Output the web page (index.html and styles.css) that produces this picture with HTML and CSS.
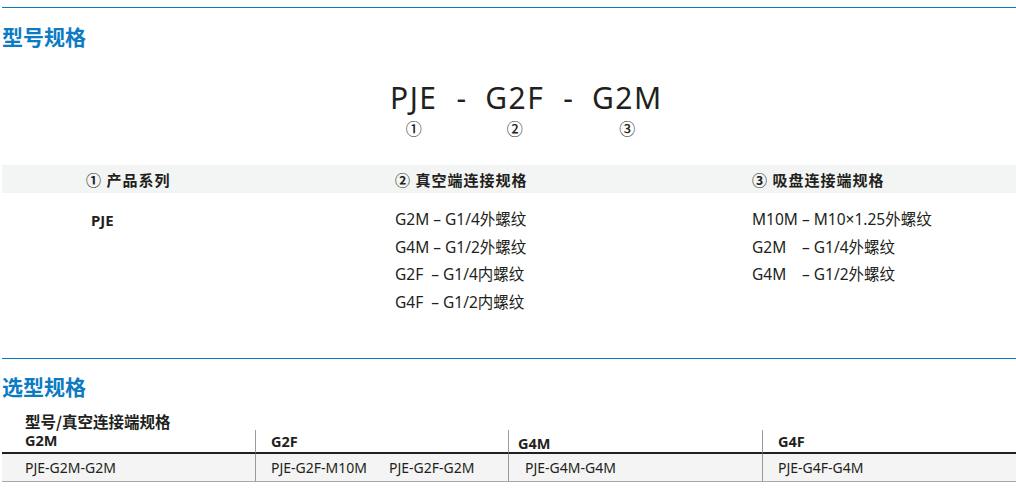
FILE: index.html
```html
<!DOCTYPE html>
<html lang="zh-CN">
<head>
<meta charset="utf-8">
<title>型号规格</title>
<link rel="stylesheet" href="styles.css">
</head>
<body>
<div class="page">
  <section class="sec sec-model">
    <div class="rule"></div>
    <h2 class="sec-title">型号规格</h2>
    <div class="code">
      <div class="seg"><span class="seg-code">PJE</span><span class="seg-num">①</span></div>
      <span class="dash">-</span>
      <div class="seg"><span class="seg-code">G2F</span><span class="seg-num">②</span></div>
      <span class="dash">-</span>
      <div class="seg"><span class="seg-code">G2M</span><span class="seg-num">③</span></div>
    </div>
    <div class="spec">
      <div class="spec-head">
        <div class="spec-cell c1">① 产品系列</div>
        <div class="spec-cell c2">② 真空端连接规格</div>
        <div class="spec-cell c3">③ 吸盘连接端规格</div>
      </div>
      <div class="spec-body">
        <div class="spec-col c1">
          <div class="series">PJE</div>
        </div>
        <div class="spec-col c2">
          <div class="opt">G2M – G1/4外螺纹</div>
          <div class="opt">G4M – G1/2外螺纹</div>
          <div class="opt">G2F&nbsp; – G1/4内螺纹</div>
          <div class="opt">G4F&nbsp; – G1/2内螺纹</div>
        </div>
        <div class="spec-col c3">
          <div class="opt"><span class="key">M10M</span>– M10×1.25外螺纹</div>
          <div class="opt"><span class="key">G2M</span>– G1/4外螺纹</div>
          <div class="opt"><span class="key">G4M</span>– G1/2外螺纹</div>
        </div>
      </div>
    </div>
  </section>

  <section class="sec sec-select">
    <div class="rule"></div>
    <h2 class="sec-title">选型规格</h2>
    <div class="sel-label">型号/真空连接端规格</div>
    <div class="sel-table">
      <div class="th t1">G2M</div>
      <div class="th t2">G2F</div>
      <div class="th t3">G4M</div>
      <div class="th t4">G4F</div>
      <div class="td t1">PJE-G2M-G2M</div>
      <div class="td t2"><span class="pair">PJE-G2F-M10M</span><span>PJE-G2F-G2M</span></div>
      <div class="td t3">PJE-G4M-G4M</div>
      <div class="td t4">PJE-G4F-G4M</div>
    </div>
  </section>
</div>
</body>
</html>
```

FILE: styles.css
```css
* { box-sizing: border-box; }
html, body { margin: 0; padding: 0; background: #ffffff; }
body {
  font-family: "Noto Sans", "Noto Sans CJK SC", sans-serif;
  color: #231f20;
  width: 1016px;
  height: 490px;
  overflow: hidden;
}
.page { padding: 7px 0 0 2px; }

.rule { height: 1px; background: #0f76c0; }
.sec-title {
  margin: 0;
  font-size: 21px;
  line-height: 30px;
  font-weight: 700;
  color: #0b7bc4;
  font-family: "Noto Sans CJK SC", sans-serif;
}
.sec-model .sec-title { margin-top: 13px; }

.code {
  display: flex;
  align-items: flex-start;
  margin-left: 388px;
  margin-top: 30px;
  height: 84px;
}
.seg { display: flex; flex-direction: column; align-items: center; }
.seg-code {
  font-size: 30px;
  line-height: 34px;
  letter-spacing: 1.5px;
}
.seg-num {
  font-size: 16px;
  line-height: 20px;
  margin-top: 3px;
  font-weight: 500;
  font-family: "Noto Sans CJK SC", sans-serif;
}
.dash {
  font-size: 30px;
  line-height: 34px;
  padding: 0 19px;
}

.spec-head {
  display: grid;
  grid-template-columns: 309px 357px 1fr;
  padding-left: 84px;
  height: 28px;
  align-items: center;
  background: #f3f5f4;
  font-weight: 700;
  font-size: 15px;
}
.spec-head .spec-cell { font-family: "Noto Sans CJK SC", sans-serif; letter-spacing: 1px; }
.spec-body {
  display: grid;
  grid-template-columns: 309px 357px 1fr;
  padding-left: 84px;
  padding-top: 13px;
  height: 165px;
}
.series { font-weight: 700; font-size: 15px; line-height: 28px; padding-left: 5px; }
.opt { font-size: 15.5px; line-height: 27.7px; white-space: pre; }
.key { display: inline-block; width: 50px; }

.sec-select .sec-title { margin-top: 12px; }
.sel-label {
  margin-top: 11px;
  padding-left: 23px;
  font-weight: 700;
  font-size: 15.5px;
  line-height: 18px;
  font-family: "Noto Sans CJK SC", sans-serif;
}
.sel-table {
  display: grid;
  grid-template-columns: 253px 253px 254px 1fr;
  grid-template-rows: 24px 28px;
}
.th {
  font-weight: 700;
  font-size: 14.5px;
  line-height: 18px;
  border-bottom: 2px solid #231f20;
  display: flex;
  align-items: center;
}
.td {
  font-size: 14px;
  background: #f3f4f3;
  border-bottom: 1px solid #a9a9a9;
  display: flex;
  align-items: center;
}
.t2, .t3, .t4 { border-left: 1px solid #9a9a9a; }
.th.t1 { padding-left: 23px; padding-bottom: 2px; }
.th.t2 { padding-left: 15px; }
.th.t3 { padding-left: 9px; padding-top: 3px; }
.th.t4 { padding-left: 15px; }
.td.t1 { padding-left: 23px; }
.td.t2 { padding-left: 15px; }
.td.t3 { padding-left: 16px; }
.td.t4 { padding-left: 15px; }
.pair { display: inline-block; width: 118px; }
```
